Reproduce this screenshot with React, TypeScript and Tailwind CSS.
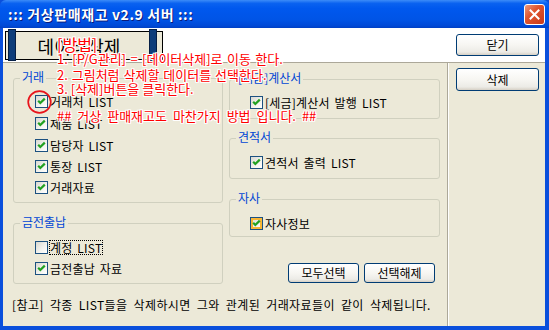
import React from "react";

const FONT = "font-['Noto_Sans_CJK_KR','Noto_Sans',sans-serif]";

function Check({ checked = true, hover = false }: { checked?: boolean; hover?: boolean }) {
  return (
    <span
      className={`relative inline-block w-[13px] h-[13px] shrink-0 border border-[#1C5180] bg-[linear-gradient(135deg,#D8D8D0_0%,#F4F4F0_60%,#FFFFFF_100%)] ${
        hover ? "shadow-[inset_0_0_0_2px_#F8B636]" : ""
      }`}
    >
      {checked && (
        <svg width="11" height="11" viewBox="0 0 11 11" className="absolute left-0 top-0">
          <path d="M2.2 4.8 L4.3 7 L8.8 2.6" fill="none" stroke="#21A121" strokeWidth="2.2" />
        </svg>
      )}
    </span>
  );
}

function Row({
  label,
  h,
  checked = true,
  hover = false,
  focus = false,
}: {
  label: string;
  h: string;
  checked?: boolean;
  hover?: boolean;
  focus?: boolean;
}) {
  return (
    <div className={`flex items-center ${h}`}>
      <Check checked={checked} hover={hover} />
      <span
        className={`ml-[2px] text-[12px] leading-[13px] text-black [word-spacing:2px] tracking-[0.2px] ${
          focus ? "outline outline-1 outline-dotted outline-black" : ""
        }`}
      >
        {label}
      </span>
    </div>
  );
}

function Group({
  title,
  className,
  children,
}: {
  title: string;
  className: string;
  children: React.ReactNode;
}) {
  return (
    <div className={`relative border border-[#D0D0BF] rounded-[3px] ${className}`}>
      <span className="absolute left-[6px] top-[-9px] px-[2px] bg-[#ECE9D8] text-[12px] leading-[14px] text-[#0046D5]">
        {title}
      </span>
      {children}
    </div>
  );
}

function XPButton({ children, className }: { children: React.ReactNode; className: string }) {
  return (
    <button
      className={`flex items-center justify-center rounded-[3px] border border-[#003C74] bg-[linear-gradient(to_bottom,#FFFFFF_0%,#F7F6F2_50%,#ECEBE6_85%,#D6D0C5_100%)] text-[12px] leading-none text-black ${className}`}
    >
      {children}
    </button>
  );
}

const RED =
  "text-[#FF0000] [text-shadow:1px_0_0_#fff,-1px_0_0_#fff,0_1px_0_#fff,0_-1px_0_#fff,1px_1px_0_#fff,-1px_-1px_0_#fff,1px_-1px_0_#fff,-1px_1px_0_#fff] whitespace-nowrap";

export default function App() {
  return (
    <div className={`relative w-[549px] h-[330px] flex flex-col overflow-hidden bg-[#0A4FDC] ${FONT}`}>
      {/* Title bar */}
      <div className="h-[28px] shrink-0 flex items-center justify-between pl-[8px] pr-[4px] rounded-t-[6px] bg-[linear-gradient(to_bottom,#3C8CF8_0%,#0A62F0_12%,#0058EE_30%,#0054E6_70%,#0049D6_92%,#0040C4_100%)]">
        <span className="text-[14px] font-bold leading-none tracking-[0.6px] text-white [text-shadow:1px_1px_0_#0A1A7A] whitespace-pre">
          ::: 거상판매재고 v2.9 서버 :::
        </span>
        <div className="w-[21px] h-[21px] rounded-[3px] border border-white flex items-center justify-center bg-[linear-gradient(135deg,#EC9A7E_0%,#E0552F_40%,#C8391A_100%)]">
          <svg width="11" height="11" viewBox="0 0 11 11">
            <path d="M1.5 1.5 L9.5 9.5 M9.5 1.5 L1.5 9.5" stroke="#FFFFFF" strokeWidth="2" strokeLinecap="square" />
          </svg>
        </div>
      </div>

      {/* Body */}
      <div className="flex-1 flex flex-col pl-[3px] pr-[4px] pb-[4px]">
        <div className="flex-1 flex flex-col bg-[#ECE9D8]">
          {/* White strip */}
          <div className="h-[35px] shrink-0 flex justify-between bg-white border-b border-[#ACA899]">
            <div className="relative ml-[2px] mt-[3px] w-[158px] h-[29px] border border-black bg-[#ECE9D8] flex items-center justify-center pr-[10px]">
              <span className="text-[18px] leading-none text-black">데이터삭제</span>
              <span className="absolute left-[2px] top-[-3px] w-[8px] h-[32px] bg-[#0E3D7A] border border-[#061F45]" />
              <span className="absolute left-[143px] top-[-3px] w-[8px] h-[32px] bg-[#0E3D7A] border border-[#061F45]" />
            </div>
            <XPButton className="mt-[6px] mr-[6px] w-[83px] h-[22px]">닫기</XPButton>
          </div>

          {/* Lower area */}
          <div className="flex-1 flex">
            <div className="w-[444px] shrink-0 flex flex-col">
              <div className="grid grid-cols-[210px_211px] gap-x-[6px] pl-[10px] pt-[15px]">
                {/* Left column */}
                <div className="flex flex-col">
                  <Group title="거래" className="h-[125px] pl-[21px] pt-[11px]">
                    <Row label="거래처 LIST" h="h-[22px]" />
                    <Row label="제품 LIST" h="h-[22px]" />
                    <Row label="담당자 LIST" h="h-[22px]" />
                    <Row label="통장 LIST" h="h-[21px]" />
                    <Row label="거래자료" h="h-[21px]" />
                  </Group>
                  <Group title="금전출납" className="mt-[20px] h-[61px] pl-[21px] pt-[13px]">
                    <Row label="계정 LIST" h="h-[21px]" checked={false} focus />
                    <Row label="금전출납 자료" h="h-[21px]" />
                  </Group>
                </div>
                {/* Right column */}
                <div className="flex flex-col">
                  <Group title="[세금]계산서" className="mt-[1px] h-[40px] pl-[20px] pt-[11px]">
                    <Row label="[세금]계산서 발행 LIST" h="h-[22px]" />
                  </Group>
                  <Group title="견적서" className="mt-[19px] h-[41px] pl-[20px] pt-[12px]">
                    <Row label="견적서 출력 LIST" h="h-[22px]" />
                  </Group>
                  <Group title="자사" className="mt-[20px] h-[38px] pl-[20px] pt-[12px]">
                    <Row label="자사정보" h="h-[22px]" hover />
                  </Group>
                  <div className="mt-[26px] flex justify-end gap-[5px] pr-[5px]">
                    <XPButton className="w-[71px] h-[20px]">모두선택</XPButton>
                    <XPButton className="w-[71px] h-[20px]">선택해제</XPButton>
                  </div>
                </div>
              </div>
              <div className="pl-[9px] mt-[13px] text-[12px] leading-[16px] text-black whitespace-nowrap [word-spacing:3px] tracking-[0.4px]">
                [참고] 각종 LIST들을 삭제하시면 그와 관계된 거래자료들이 같이 삭제됩니다.
              </div>
            </div>
            <div className="flex-1 border-l border-[#ACA899] shadow-[inset_1px_0_0_#FFFFFF] pl-[8px] pt-[5px]">
              <XPButton className="w-[83px] h-[23px]">삭제</XPButton>
            </div>
          </div>
        </div>
      </div>

      {/* Red annotation overlay */}
      <span className={`absolute left-[57px] top-[35px] text-[16px] leading-[18px] ${RED}`}>[방법]</span>
      <span className={`absolute left-[57px] top-[51px] text-[13px] leading-[16px] [word-spacing:1.5px] ${RED}`}>
        1. [P/G관리] = [데이터삭제]로 이동 한다.
      </span>
      <span className={`absolute left-[57px] top-[67px] text-[13px] leading-[16px] [word-spacing:1px] ${RED}`}>
        2. 그림처럼 삭제할 데이터를 선택한다.
      </span>
      <span className={`absolute left-[57px] top-[81px] text-[13px] leading-[16px] ${RED}`}>
        3. [삭제]버튼을 클릭한다.
      </span>
      <span className={`absolute left-[57px] top-[108px] text-[13px] leading-[16px] [word-spacing:3px] ${RED}`}>
        ## 거상 판매재고도 마찬가지 방법 입니다. ##
      </span>
      <svg className="absolute left-[27px] top-[90px]" width="25" height="24" viewBox="0 0 25 24">
        <ellipse cx="12.5" cy="12" rx="11.3" ry="10.8" fill="none" stroke="#E8141B" strokeWidth="1.7" />
      </svg>
    </div>
  );
}
